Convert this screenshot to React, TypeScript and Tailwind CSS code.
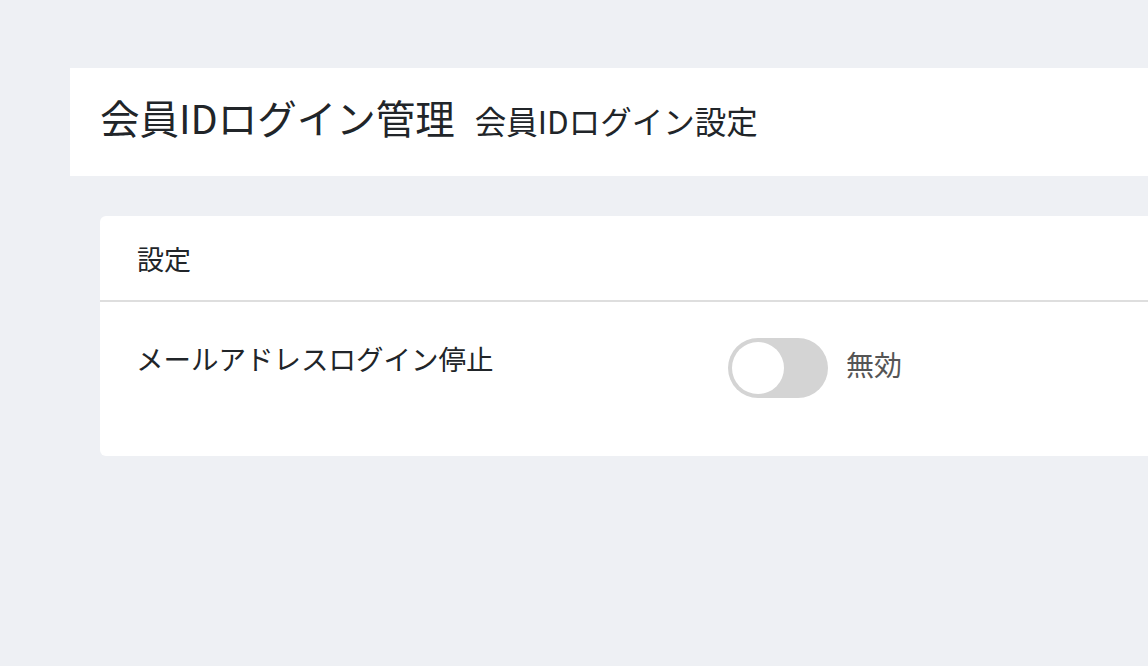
export default function App() {
    return (
        <div
            className="w-[1148px] h-[666px] overflow-hidden bg-[#eef0f4] text-[#212529]"
            style={{ fontFamily: '"Noto Sans CJK JP", "Noto Sans", sans-serif' }}
        >
            <div className="pl-[70px] pt-[68px]">
                <div className="h-[108px] bg-white flex items-baseline pl-[30px] pt-[21px]">
                    <h1 className="text-[39.5px] leading-[56px] font-normal">会員IDログイン管理</h1>
                    <span className="ml-[20px] text-[31.5px] leading-[56px]">会員IDログイン設定</span>
                </div>

                <div className="ml-[30px] mt-[40px] bg-white rounded-l-[6px]">
                    <div className="h-[86px] flex items-center pl-[37px] pt-[2px] border-b-2 border-[#dedede]">
                        <span className="text-[27px]">設定</span>
                    </div>
                    <div className="flex items-start pl-[36px] pt-[36px] pb-[58px]">
                        <div className="w-[592px] text-[27.5px] leading-[40px]">メールアドレスログイン停止</div>
                        <div className="flex items-center">
                            <button className="w-[100px] h-[60px] rounded-full bg-[#d4d4d4] p-[4px] flex items-center">
                                <span className="block w-[52px] h-[52px] rounded-full bg-white" />
                            </button>
                            <span className="ml-[18px] text-[28px] leading-[40px] text-[#555] mb-[8px]">無効</span>
                        </div>
                    </div>
                </div>
            </div>
        </div>
    );
}
